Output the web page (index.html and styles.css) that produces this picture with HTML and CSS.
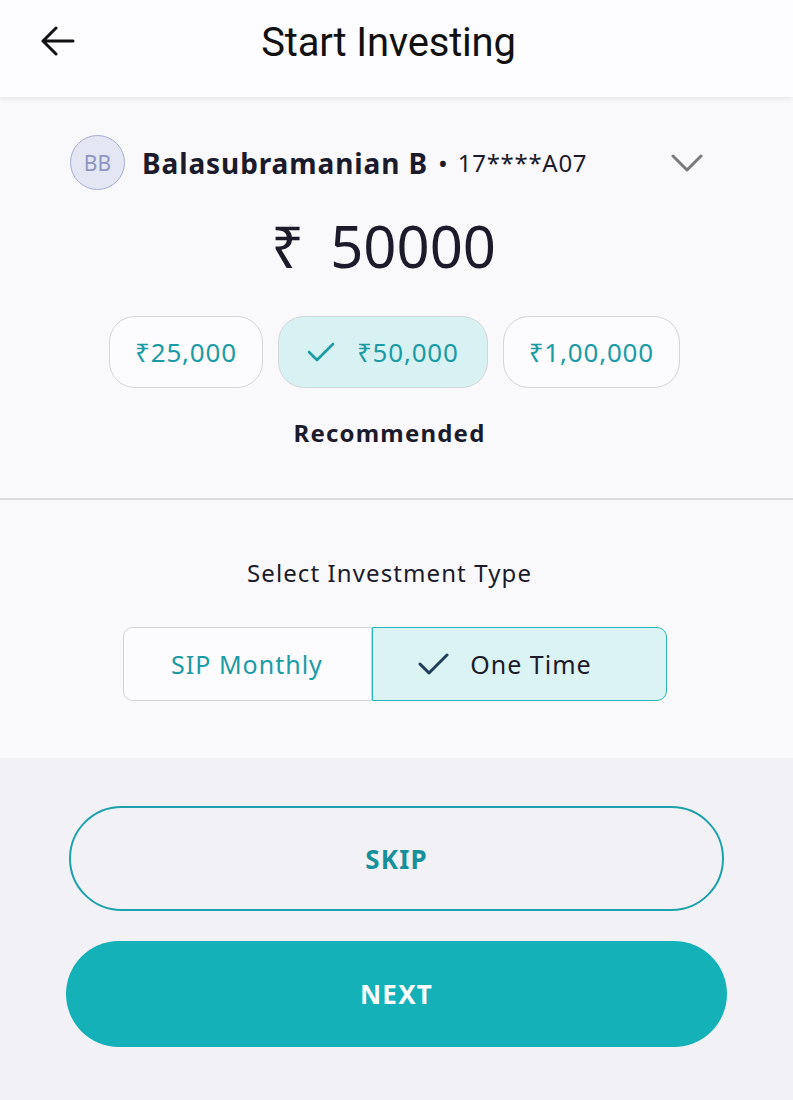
FILE: index.html
```html
<!DOCTYPE html>
<html lang="en">
<head>
    <meta charset="UTF-8">
    <meta name="viewport" content="width=device-width, initial-scale=1.0">
    <title>Start Investing</title>
    <link rel="stylesheet" href="styles.css">
</head>
<body>
    <div class="app-bar">
        <svg class="back" width="34" height="30" viewBox="0 0 34 30">
            <path d="M32 15H3M15 2L2 15L15 28" fill="none" stroke="#111" stroke-width="3" stroke-linecap="round" stroke-linejoin="round"/>
        </svg>
        <h1>Start Investing</h1>
    </div>

    <div class="top-card">
        <div class="account">
            <div class="avatar">BB</div>
            <span class="name">Balasubramanian B</span>
            <span class="dot">&bull;</span>
            <span class="pan">17****A07</span>
            <svg class="chevron" width="32" height="18" viewBox="0 0 32 18">
                <path d="M2 2L16 16L30 2" fill="none" stroke="#7a7a7e" stroke-width="3" stroke-linecap="round" stroke-linejoin="round"/>
            </svg>
        </div>

        <div class="amount"><span class="rupee">&#8377;</span>50000</div>

        <div class="chips">
            <div class="chip">&#8377;25,000</div>
            <div class="chip selected">
                <svg width="28" height="22" viewBox="0 0 28 22">
                    <path d="M2 11L10 19L26 3" fill="none" stroke="#1b9ba5" stroke-width="2.6" stroke-linecap="round" stroke-linejoin="round"/>
                </svg>
                &#8377;50,000
            </div>
            <div class="chip">&#8377;1,00,000</div>
        </div>
        <div class="recommended">Recommended</div>
    </div>

    <div class="type-section">
        <div class="type-label">Select Investment Type</div>
        <div class="segment">
            <div class="seg-option">SIP Monthly</div>
            <div class="seg-option active">
                <svg width="32" height="24" viewBox="0 0 32 24">
                    <path d="M2 12L11 21L29 3" fill="none" stroke="#1f3f5a" stroke-width="3" stroke-linecap="round" stroke-linejoin="round"/>
                </svg>
                One Time
            </div>
        </div>
    </div>

    <div class="actions">
        <button class="btn skip">SKIP</button>
        <button class="btn next">NEXT</button>
    </div>
</body>
</html>
```

FILE: styles.css
```css
body {
    margin: 0;
    padding: 0;
    font-family: 'Noto Sans', 'Open Sans', sans-serif;
    background: #f2f1f5;
    color: #1b1b2b;
}

.app-bar {
    height: 97px;
    background: #fdfcfe;
    display: flex;
    align-items: center;
    justify-content: center;
    position: relative;
    box-shadow: 0 2px 6px rgba(0, 0, 0, 0.08);
    z-index: 1;
}

.back {
    position: absolute;
    left: 41px;
    top: 26px;
}

.app-bar h1 {
    margin: -12px 16px 0 0;
    font-family: 'Roboto', sans-serif;
    font-weight: 400;
    font-size: 40px;
    color: #111;
    letter-spacing: -0.2px;
}

.top-card {
    background: #f9f8fb;
    padding: 38px 0 49px;
    border-bottom: 2px solid #dddcdf;
}

.account {
    display: flex;
    align-items: center;
    padding-left: 70px;
    padding-right: 90px;
}

.avatar {
    width: 53px;
    height: 53px;
    border-radius: 50%;
    background: #e4e6f4;
    border: 1px solid #a7aed2;
    color: #8e96c0;
    font-size: 21px;
    display: flex;
    align-items: center;
    justify-content: center;
}

.name {
    margin-left: 17px;
    font-weight: 700;
    font-size: 28px;
    letter-spacing: 0.9px;
}

.dot {
    margin-left: 10px;
    font-size: 26px;
}

.pan {
    margin-left: 10px;
    font-size: 24px;
    letter-spacing: 0.7px;
}

.chevron {
    margin-left: auto;
}

.amount {
    text-align: center;
    margin-top: 16px;
    padding-right: 26px;
    font-size: 58px;
    line-height: 80px;
}

.rupee {
    margin-right: 26px;
}

.chips {
    display: flex;
    justify-content: center;
    gap: 15px;
    margin-top: 30px;
    padding-right: 4px;
}

.chip {
    height: 72px;
    box-sizing: border-box;
    padding: 0 25px;
    border: 1px solid #d6d6d8;
    border-radius: 26px;
    background: #fcfbfd;
    color: #1b9ba5;
    font-size: 26px;
    letter-spacing: 0.8px;
    display: flex;
    align-items: center;
    gap: 22px;
}

.chip.selected {
    background: #d8f1f2;
    padding: 0 28px;
}

.recommended {
    text-align: center;
    font-weight: 700;
    font-size: 24px;
    letter-spacing: 1.2px;
    margin-top: 28px;
    padding-right: 14px;
}

.type-section {
    background: #f9f8fb;
    padding: 56px 0 57px;
}

.type-label {
    text-align: center;
    font-size: 24px;
    letter-spacing: 1.1px;
    padding-right: 14px;
}

.segment {
    display: flex;
    justify-content: center;
    height: 74px;
    margin-top: 38px;
    padding-right: 4px;
}

.seg-option {
    width: 249px;
    box-sizing: border-box;
    display: flex;
    align-items: center;
    justify-content: center;
    font-size: 25px;
    letter-spacing: 1px;
    color: #1b9ba5;
    border: 1.5px solid #d2d2d4;
    border-radius: 10px 0 0 10px;
    background: #fcfbfd;
}

.seg-option.active {
    width: 295px;
    background: #dcf3f4;
    border-color: #2bb3bb;
    border-radius: 0 10px 10px 0;
    color: #1b1b2b;
    gap: 20px;
    padding-right: 28px;
}

.actions {
    display: flex;
    flex-direction: column;
    align-items: center;
    padding-top: 48px;
    gap: 30px;
}

.btn {
    font-family: 'Noto Sans', sans-serif;
    font-weight: 700;
    font-size: 26px;
    letter-spacing: 1.2px;
    border-radius: 53px;
    cursor: pointer;
}

.skip {
    width: 655px;
    height: 105px;
    background: transparent;
    border: 2px solid #1ca2ad;
    color: #16909b;
}

.next {
    width: 661px;
    height: 106px;
    background: #15b1b9;
    border: none;
    color: #fff;
}
```
